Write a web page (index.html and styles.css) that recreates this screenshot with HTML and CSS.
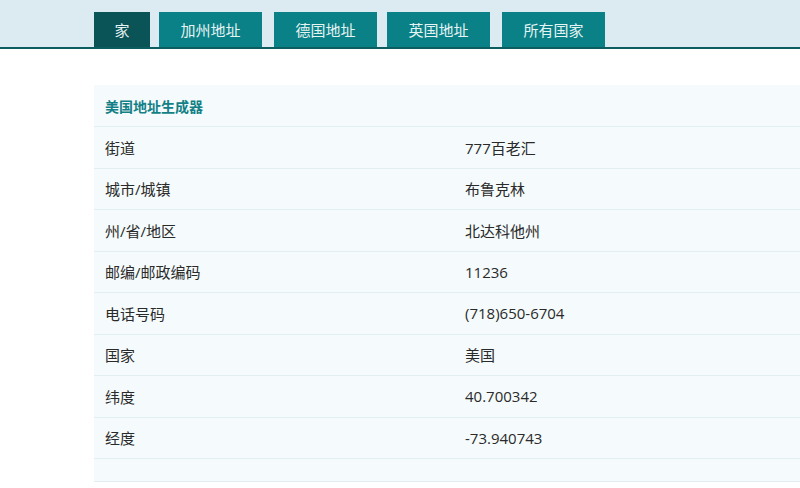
FILE: index.html
```html
<!DOCTYPE html>
<html lang="zh">
<head>
<meta charset="utf-8">
<title>美国地址生成器</title>
<link rel="stylesheet" href="styles.css">
</head>
<body>
<header class="topbar">
  <nav class="tabs">
    <a class="tab active" href="#">家</a>
    <a class="tab" href="#">加州地址</a>
    <a class="tab" href="#">德国地址</a>
    <a class="tab" href="#">英国地址</a>
    <a class="tab" href="#">所有国家</a>
  </nav>
</header>
<main class="main">
  <table class="addr">
    <thead>
      <tr><th colspan="2">美国地址生成器</th></tr>
    </thead>
    <tbody>
      <tr><td>街道</td><td>777百老汇</td></tr>
      <tr><td>城市/城镇</td><td>布鲁克林</td></tr>
      <tr><td>州/省/地区</td><td>北达科他州</td></tr>
      <tr><td>邮编/邮政编码</td><td>11236</td></tr>
      <tr><td>电话号码</td><td>(718)650-6704</td></tr>
      <tr><td>国家</td><td>美国</td></tr>
      <tr><td>纬度</td><td>40.700342</td></tr>
      <tr><td>经度</td><td>-73.940743</td></tr>
      <tr class="empty"><td></td><td></td></tr>
    </tbody>
  </table>
</main>
</body>
</html>
```

FILE: styles.css
```css
html, body {
  margin: 0;
  padding: 0;
  background: #ffffff;
  overflow: hidden;
  font-family: "Open Sans", "Noto Sans CJK SC", sans-serif;
  color: #222;
}
.topbar {
  background: #dbebf1;
  border-bottom: 2px solid #0b5d60;
  padding-top: 12px;
}
.tabs {
  display: flex;
  padding-left: 94px;
  height: 35px;
}
.tab {
  display: flex;
  align-items: center;
  justify-content: center;
  height: 35px;
  width: 103px;
  margin-right: 12px;
  background: #0a8186;
  color: #e6f3f3;
  text-decoration: none;
  font-size: 15px;
  font-family: "Noto Sans CJK SC", sans-serif;
}
.tab.active {
  width: 56px;
  margin-right: 9px;
  background: #0a5457;
}
.tabs .tab:nth-child(3) { margin-right: 10px; }
.main {
  padding: 36px 0 0 94px;
}
.addr {
  width: 722px;
  border-collapse: collapse;
  background: #f5fbfc;
  table-layout: fixed;
}
.addr th {
  text-align: left;
  height: 41px;
  padding: 0 11px;
  font-size: 14px;
  font-weight: 700;
  color: #137f86;
  font-family: "Noto Sans CJK SC", sans-serif;
  border-bottom: 1px solid #e1eef2;
}
.addr td {
  height: 40.5px;
  padding: 0 11px;
  font-size: 15px;
  border-bottom: 1px solid #e1eef2;
  color: #2a2a2a;
}
.addr td + td {
  padding-left: 10px;
}
.addr tr.empty td {
  height: 22px;
}
```
